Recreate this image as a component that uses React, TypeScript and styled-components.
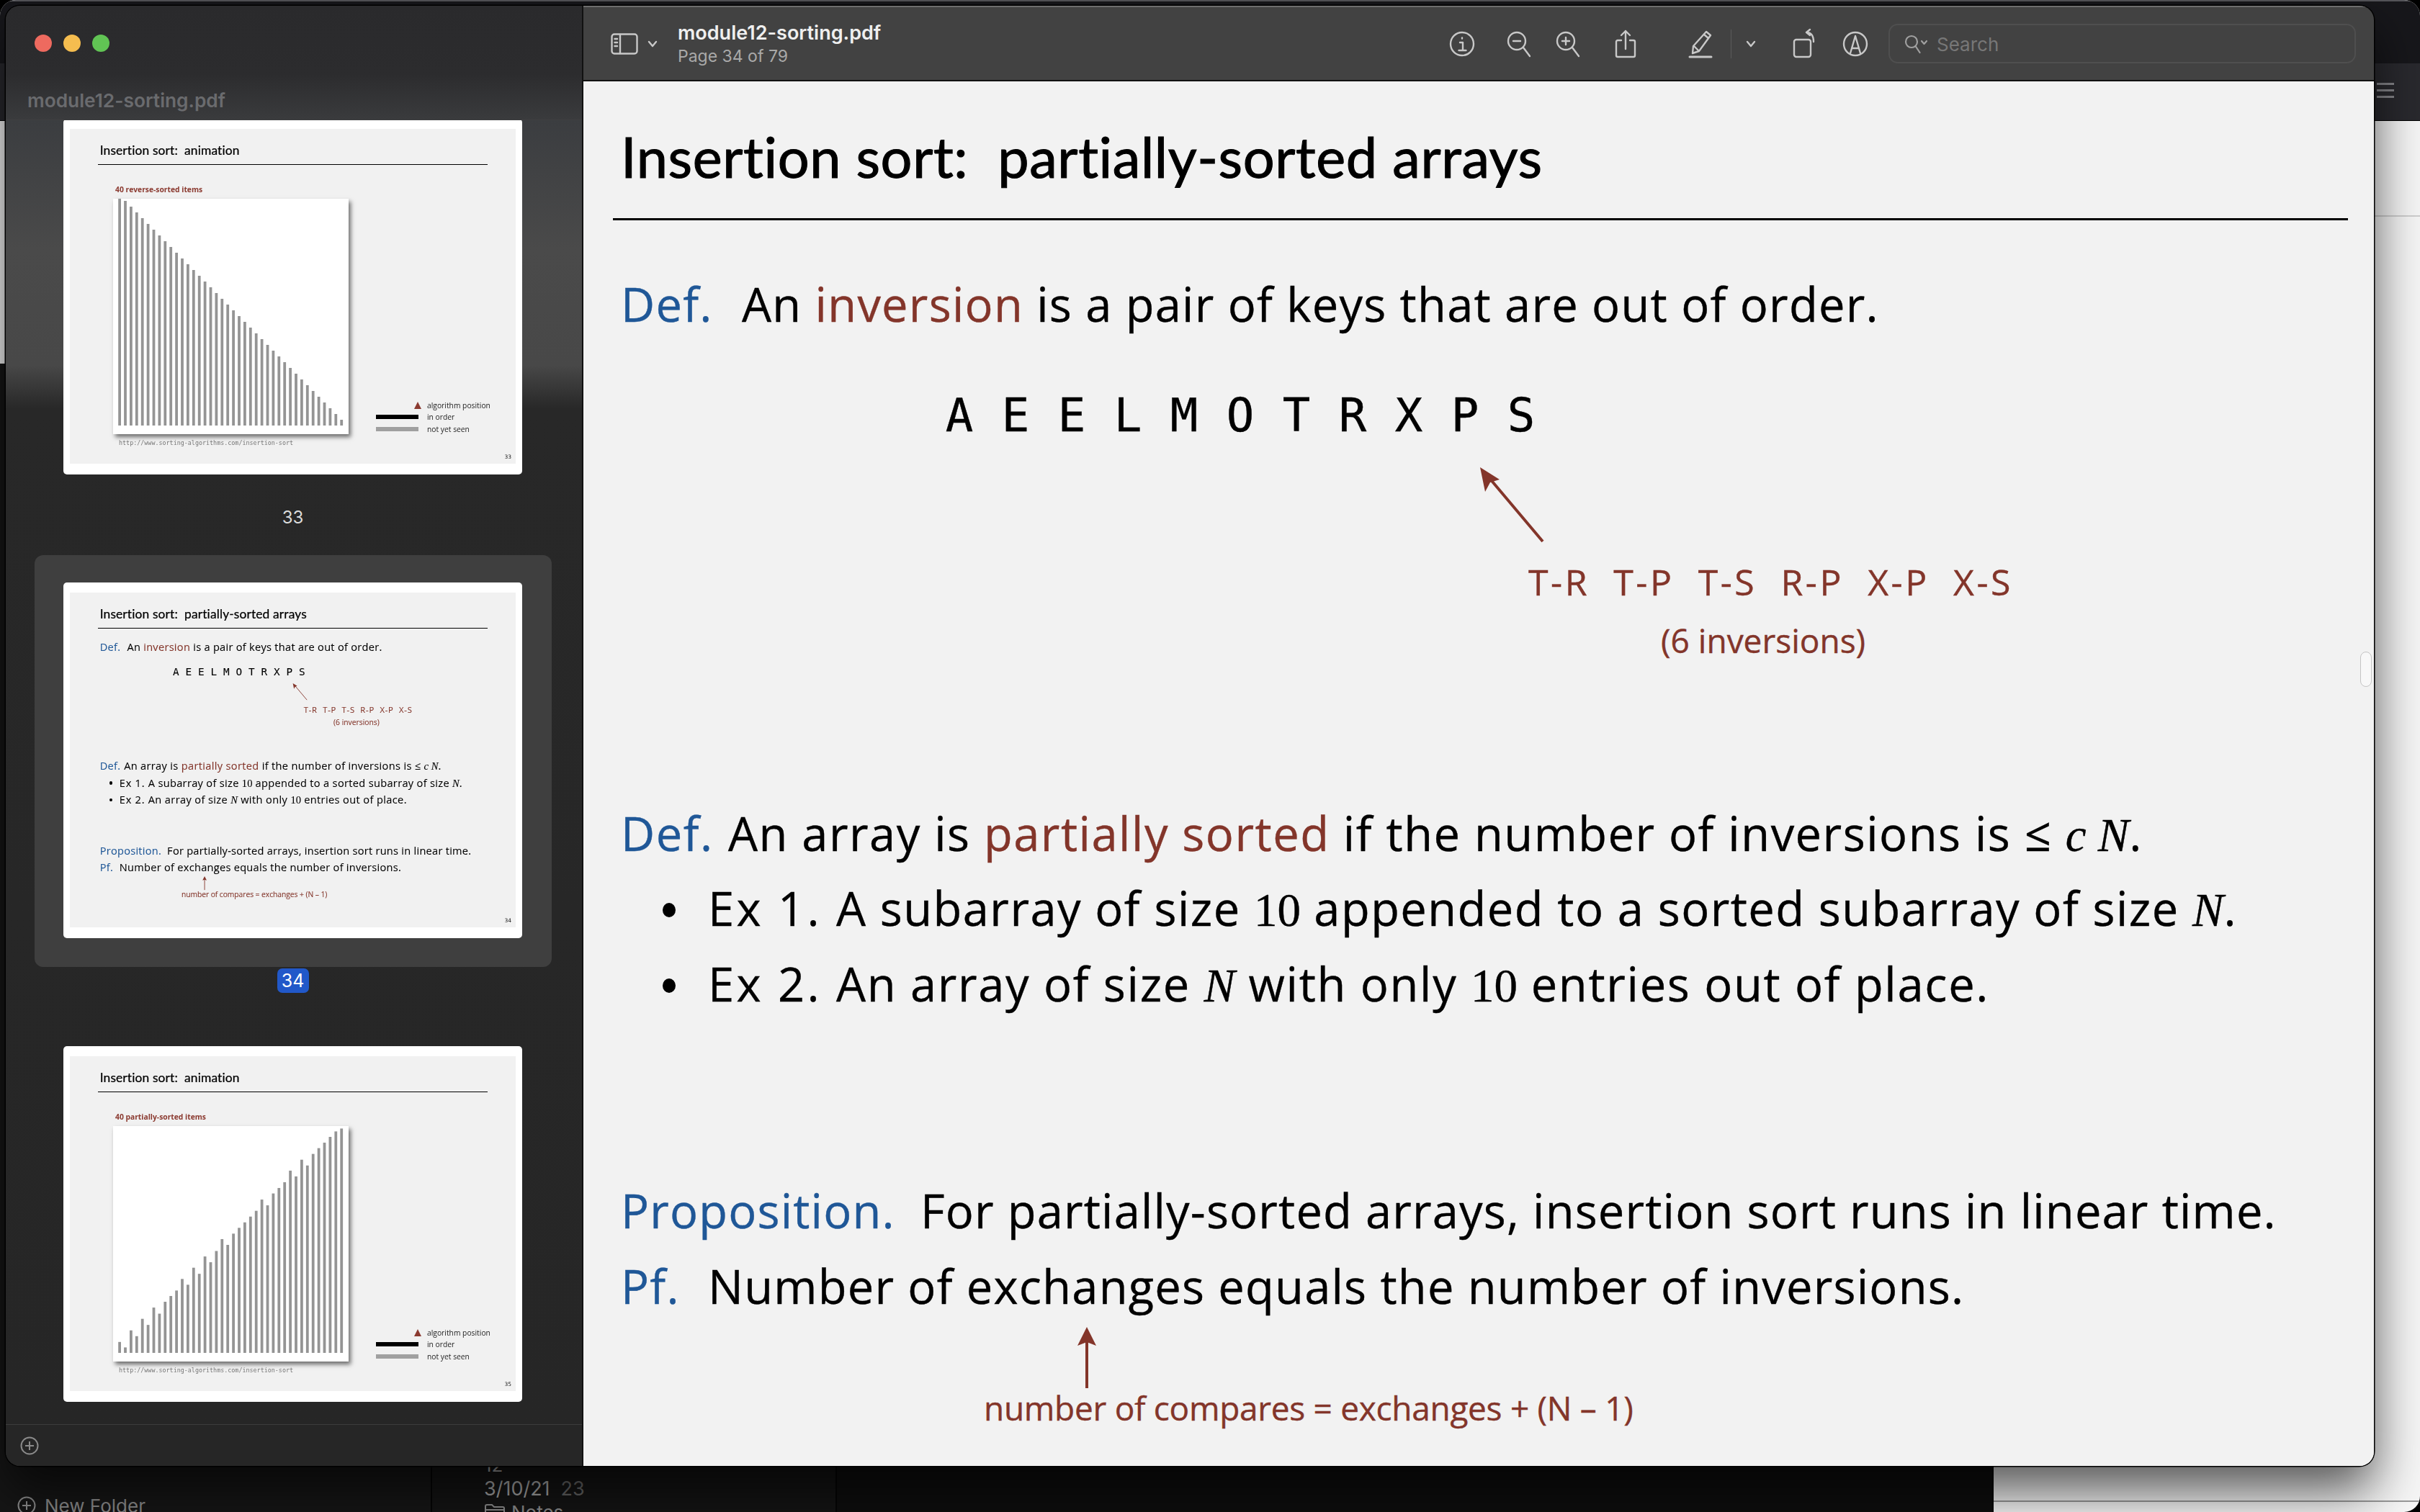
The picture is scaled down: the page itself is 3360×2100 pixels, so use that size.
import React from 'react';
import styled, { createGlobalStyle } from 'styled-components';

const GlobalStyle = createGlobalStyle`
  html, body { margin: 0; padding: 0; background: #000; }
  * { box-sizing: border-box; }
`;

const BLUE = '#1f5797';
const RED = '#83352a';
const THUMB_ZOOM = 0.2246;

/* ---------- the desktop behind the window ---------- */

const Desktop = styled.div`
  position: relative;
  width: 3360px;
  height: 2100px;
  overflow: hidden;
  background: #000;
  font-family: Inter, "Liberation Sans", sans-serif;
`;

const BackWindow = styled.div`
  position: absolute;
  inset: 0;
  border-radius: 22px;
  overflow: hidden;
  background: #f6f6f6;
  display: flex;
  flex-direction: column;
`;

const BackHeader = styled.div`
  height: 168px;
  flex-shrink: 0;
  border-top: 2px solid #55555a;
  background: linear-gradient(#17171b 0, #17171b 86px, #29292e 86px, #29292e 100%);
  border-bottom: 1px solid #000;
  display: flex;
  flex-direction: column;
  justify-content: flex-end;
  align-items: flex-end;
  gap: 6px;
  padding: 0 36px 31px 0;
`;

const BackBar = styled.div`
  width: 24px;
  height: 3px;
  background: #85858a;
`;

const BackLine = styled.div<{ $top: number; $left: number; $color: string }>`
  position: absolute;
  top: ${p => p.$top}px;
  left: ${p => p.$left}px;
  right: 0;
  height: 2px;
  background: ${p => p.$color};
`;

const BackPanels = styled.div`
  position: absolute;
  left: 0;
  top: 505px;
  bottom: 0;
  width: 2768px;
  border-radius: 22px 0 0 0;
  background: #161616;
  display: flex;
  color: #8c8c8c;
  font-size: 26px;
`;

const BackColumn = styled.div<{ $w?: number; $bg: string }>`
  ${p => (p.$w ? `width: ${p.$w}px;` : 'flex: 1;')}
  background: ${p => p.$bg};
  border-right: 2px solid #050505;
  display: flex;
  flex-direction: column;
  justify-content: flex-end;
  overflow: hidden;
`;

const NewFolder = styled.div`
  display: flex;
  align-items: center;
  gap: 12px;
  margin: 0 0 -8px 24px;
  height: 34px;
`;

const DateRow = styled.div`
  margin: 0 0 -6px 72px;
  height: 36px;
  line-height: 36px;
  display: flex;
  gap: 15px;
  color: #a8a8a8;
  font-size: 27px;
`;

const CountText = styled.span`
  color: #666;
`;

const NotesRow = styled.div`
  margin: 0 0 -20px 72px;
  height: 40px;
  display: flex;
  align-items: center;
  gap: 8px;
`;

const CutRow = styled.div`
  margin: 0 0 11px 72px;
  height: 8px;
  line-height: 8px;
  color: #a8a8a8;
`;

/* ---------- PDF window ---------- */

const Window = styled.div`
  position: absolute;
  left: 8px;
  top: 8px;
  width: 3288px;
  height: 2028px;
  border-radius: 20px;
  overflow: hidden;
  display: flex;
  box-shadow: 0 0 0 1.5px #000, 0 35px 70px rgba(0, 0, 0, 0.65);
`;

const Sidebar = styled.aside`
  width: 802px;
  flex-shrink: 0;
  display: flex;
  flex-direction: column;
  background: #262626;
  border-right: 2px solid #111;
`;

const SidebarHeader = styled.div`
  height: 159px;
  flex-shrink: 0;
  padding: 40px 0 0 40px;
  background: linear-gradient(#2a2a2c 0, #2c2c2e 60%, #3a3b3d 100%);
  border-bottom: 1px solid #3f3f41;
`;

const Lights = styled.div`
  display: flex;
  gap: 16px;
`;

const Light = styled.span<{ $color: string }>`
  width: 24px;
  height: 24px;
  border-radius: 50%;
  background: ${p => p.$color};
`;

const SidebarTitle = styled.div`
  margin: 52px 0 0 -10px;
  font-size: 26.3px;
  line-height: 32px;
  font-weight: 600;
  color: #6a6b6e;
`;

const ThumbScroller = styled.div`
  flex: 1;
  overflow: hidden;
  background: linear-gradient(#3b3d40 0, #4a4a4a 180px, #484848 340px, #282828 400px, #262626 100%);
`;

const ThumbList = styled.div`
  display: flex;
  flex-direction: column;
  align-items: center;
  padding-right: 3px;
  margin-top: -2px;
`;

const PageLabel = styled.div`
  margin-top: 43px;
  height: 34px;
  line-height: 34px;
  font-size: 24px;
  color: #dcdcdc;
`;

const Selection = styled.div`
  margin-top: 35px;
  width: 718px;
  padding: 38px 0 40px;
  border-radius: 12px;
  background: #3f3f3f;
  display: flex;
  justify-content: center;
`;

const PageBadge = styled.div`
  margin-top: 2px;
  width: 44px;
  height: 34px;
  line-height: 34px;
  border-radius: 7px;
  background: #2158c9;
  color: #fff;
  font-size: 25px;
  text-align: center;
`;

const ThumbGap = styled.div`
  height: 74px;
`;

const SidebarFooter = styled.div`
  height: 58px;
  flex-shrink: 0;
  border-top: 1px solid #3c3c3c;
  background: #262626;
  padding: 16px 0 0 20px;
`;

/* ---------- thumbnails ---------- */

const Thumb = styled.div`
  width: 637px;
  height: 494px;
  flex-shrink: 0;
  padding: 14px 9px 15px;
  background: #fff;
  border-radius: 5px;
`;

const ThumbSheet = styled.div`
  position: relative;
  height: 100%;
  background: #f1f1f1;
  overflow: hidden;
  filter: blur(0.45px);
`;

const ThumbScale = styled.div`
  zoom: ${THUMB_ZOOM};
  padding: 26.8px 0 0 133.6px;
`;

const PageNumber = styled.span`
  position: absolute;
  right: 6px;
  bottom: 5px;
  font-family: "DejaVu Sans", sans-serif;
  font-size: 7.5px;
  color: #222;
`;

const ChartLabel = styled.div`
  margin: 27.6px 0 0 63px;
  height: 14px;
  line-height: 14px;
  font-family: "Open Sans", sans-serif;
  font-weight: 700;
  font-size: 10.3px;
  color: #8b3a30;
`;

const ChartRow = styled.div`
  margin: 6px 0 0 60px;
  display: flex;
  align-items: flex-end;
  gap: 38px;
`;

const ChartFrame = styled.svg`
  display: block;
  width: 327px;
  height: 327px;
  background: #fff;
  box-shadow: 3px 4px 6px rgba(0, 0, 0, 0.55);
`;

const Legend = styled.div`
  display: grid;
  grid-template-columns: 59px auto;
  column-gap: 12px;
  grid-auto-rows: 16.5px;
  align-items: center;
  margin-bottom: -1px;
  font-family: "Open Sans", sans-serif;
  font-size: 10.3px;
  color: #222;
`;

const LegendMark = styled.div<{ $color: string }>`
  height: 6px;
  background: ${p => p.$color};
`;

const LegendTriangle = styled.div`
  justify-self: end;
  margin-right: -4px;
  width: 0;
  height: 0;
  border-left: 5px solid transparent;
  border-right: 5px solid transparent;
  border-bottom: 10px solid #8b3a30;
`;

const SourceUrl = styled.div`
  margin: 6px 0 0 68px;
  font-family: "DejaVu Sans Mono", monospace;
  font-size: 8.4px;
  line-height: 12px;
  color: #777;
`;

/* ---------- toolbar ---------- */

const Main = styled.main`
  flex: 1;
  min-width: 0;
  display: flex;
  flex-direction: column;
`;

const Toolbar = styled.header`
  height: 105px;
  flex-shrink: 0;
  display: flex;
  align-items: center;
  padding: 0 25px 0 37px;
  background: #424242;
  border-top: 2px solid #6d6d6d;
  border-bottom: 2px solid #111;
  color: #c8c8c8;
`;

const DocInfo = styled.div`
  flex: 1;
  margin-left: 28px;
`;

const DocTitle = styled.div`
  font-size: 27px;
  line-height: 32px;
  font-weight: 600;
  color: #efefef;
`;

const DocPage = styled.div`
  margin-top: 2px;
  font-size: 23px;
  line-height: 28px;
  color: #a9a9a9;
`;

const Tool = styled.div<{ $w?: number; $ml?: number }>`
  width: ${p => p.$w ?? 44}px;
  margin-left: ${p => p.$ml ?? 0}px;
  flex-shrink: 0;
  display: flex;
  justify-content: center;
  svg {
    display: block;
    overflow: visible;
    fill: none;
    stroke: currentColor;
    stroke-width: 2.4;
    stroke-linecap: round;
    stroke-linejoin: round;
  }
`;

const ToolDivider = styled.div`
  width: 1px;
  height: 40px;
  margin-left: 20px;
  background: #5a5a5a;
`;

const SearchField = styled.div`
  width: 649px;
  height: 55px;
  margin-left: 24px;
  flex-shrink: 0;
  display: flex;
  align-items: center;
  gap: 13px;
  padding: 2px 0 0 20px;
  border: 2px solid #4f4f4f;
  border-radius: 13px;
  color: #777;
  font-size: 26px;
  svg {
    fill: none;
    stroke: #a0a0a0;
    stroke-width: 2.2;
    stroke-linecap: round;
    stroke-linejoin: round;
  }
`;

/* ---------- the slide ---------- */

const Page = styled.section`
  position: relative;
  flex: 1;
  min-height: 0;
  background: #f2f2f2;
  overflow: hidden;
`;

const SlideColumn = styled.div`
  width: 2486px;
  white-space: pre;
  color: #000;
  font-family: "Open Sans", sans-serif;
  -webkit-text-stroke: 0.4px currentColor;
`;

const SlideTitle = styled.h1`
  margin: 0;
  height: 190px;
  padding: 20px 0 0 52px;
  line-height: 170px;
  font-family: Lato, sans-serif;
  font-size: 77.5px;
  font-weight: 400;
  letter-spacing: 0.6px;
  -webkit-text-stroke: 1.1px #000;
`;

const SlideRule = styled.div`
  margin-left: 41px;
  width: 2409px;
  height: 3px;
  background: #000;
`;

const TextLine = styled.div<{ $top: number; $spacing?: number }>`
  margin-top: ${p => p.$top}px;
  padding-left: 52px;
  height: 100px;
  line-height: 100px;
  font-size: 65px;
  letter-spacing: ${p => p.$spacing ?? 0}px;
`;

const Lead = styled.span<{ $w: number }>`
  display: inline-block;
  width: ${p => p.$w}px;
  color: ${BLUE};
`;

const Term = styled.span`
  color: ${RED};
`;

const ExLabel = styled.span`
  letter-spacing: 3.3px;
`;

const Bullet = styled.span`
  display: inline-block;
  width: 18px;
  height: 20px;
  margin: 0 45px 0 58px;
  border-radius: 50%;
  background: #000;
  vertical-align: 12px;
`;

const Serif = styled.span`
  font-family: "Liberation Serif", serif;
  letter-spacing: 0;
`;

const SerifItalic = styled(Serif)`
  font-style: italic;
`;

const KeyRow = styled.div`
  margin: 55px 0 0 483px;
  height: 100px;
  display: flex;
`;

const Key = styled.span`
  width: 78px;
  text-align: center;
  line-height: 100px;
  font-family: "DejaVu Sans Mono", monospace;
  font-size: 64px;
`;

const ArrowRow = styled.svg<{ $top: number; $h: number }>`
  display: block;
  margin-top: ${p => p.$top}px;
  width: 2486px;
  height: ${p => p.$h}px;
  overflow: visible;
`;

const RedLine = styled.div<{ $top: number; $left: number; $size: number; $h: number; $spacing?: number }>`
  margin-top: ${p => p.$top}px;
  padding-left: ${p => p.$left}px;
  height: ${p => p.$h}px;
  line-height: ${p => p.$h}px;
  font-size: ${p => p.$size}px;
  letter-spacing: ${p => p.$spacing ?? 0}px;
  color: ${RED};
`;

const PageGrip = styled.div`
  position: absolute;
  right: 3px;
  top: 792px;
  width: 16px;
  height: 49px;
  border-radius: 8px;
  background: #f8f8f8;
  border: 1px solid #c4c4c4;
`;

/* ---------- data ---------- */

const KEYS = ['A', 'E', 'E', 'L', 'M', 'O', 'T', 'R', 'X', 'P', 'S'];

const REVERSED = Array.from({ length: 40 }, (_, i) => 8 * (40 - i));

const PARTIAL_TOPS = [
  1040, 1057, 1004, 1022, 968, 987, 933, 952, 915, 897, 880, 844, 862, 809, 828, 774, 792, 757, 720, 738,
  703, 685, 668, 650, 632, 597, 615, 578, 561, 543, 507, 525, 473, 491, 455, 437, 420, 402, 385, 376,
];
const PARTIAL = PARTIAL_TOPS.map(top => (1074 - top) / 2.24);

/* ---------- pieces ---------- */

const SlideHead: React.FC<{ topic: string }> = ({ topic }) => (
  <>
    <SlideTitle>{`Insertion sort:  ${topic}`}</SlideTitle>
    <SlideRule />
  </>
);

const PartialSlide: React.FC = () => (
  <SlideColumn>
    <SlideHead topic="partially-sorted arrays" />
    <TextLine $top={66} $spacing={1.25}>
      <Lead $w={168}>Def.</Lead>An <Term>inversion</Term> is a pair of keys that are out of order.
    </TextLine>
    <KeyRow>
      {KEYS.map((k, i) => (
        <Key key={i}>{k}</Key>
      ))}
    </KeyRow>
    <ArrowRow $top={22} $h={103} viewBox="0 0 2486 103">
      <line x1="1332" y1="103" x2="1252" y2="8" stroke={RED} strokeWidth="4" />
      <polygon points="1245,0 1272,17 1259,21 1252,34" fill={RED} />
    </ArrowRow>
    <RedLine $top={18} $left={1312} $size={50} $h={76} $spacing={3.55}>T-R  T-P  T-S  R-P  X-P  X-S</RedLine>
    <RedLine $top={5} $left={1496} $size={46} $h={76}>(6 inversions)</RedLine>
    <TextLine $top={180} $spacing={1.5}>
      <Lead $w={149}>Def.</Lead>An array is <Term>partially sorted</Term> if the number of inversions is ≤ <SerifItalic>c N</SerifItalic>.
    </TextLine>
    <TextLine $top={4} $spacing={1.45}>
      <Bullet /><ExLabel>Ex 1. </ExLabel>A subarray of size <Serif>10</Serif> appended to a sorted subarray of size <SerifItalic>N</SerifItalic>.
    </TextLine>
    <TextLine $top={5} $spacing={1.7}>
      <Bullet /><ExLabel>Ex 2. </ExLabel>An array of size <SerifItalic>N</SerifItalic> with only <Serif>10</Serif> entries out of place.
    </TextLine>
    <TextLine $top={215} $spacing={1.17}>
      <Lead $w={416}>Proposition.</Lead>For partially-sorted arrays, insertion sort runs in linear time.
    </TextLine>
    <TextLine $top={5} $spacing={1.23}>
      <Lead $w={121}>Pf.</Lead>Number of exchanges equals the number of inversions.
    </TextLine>
    <ArrowRow $top={7} $h={85} viewBox="0 0 2486 85">
      <line x1="699" y1="85" x2="699" y2="18" stroke={RED} strokeWidth="4" />
      <polygon points="699,0 712,26 699,21 686,26" fill={RED} />
    </ArrowRow>
    <RedLine $top={2} $left={556} $size={46} $h={50} $spacing={-0.3}>number of compares = exchanges + (N – 1)</RedLine>
  </SlideColumn>
);

const AnimationSheet: React.FC<{ label: string; bars: number[]; page: number }> = ({ label, bars, page }) => (
  <ThumbSheet>
    <ThumbScale>
      <SlideColumn>
        <SlideHead topic="animation" />
      </SlideColumn>
    </ThumbScale>
    <ChartLabel>{label}</ChartLabel>
    <ChartRow>
      <ChartFrame viewBox="0 0 327 327">
        {bars.map((h, i) => (
          <rect key={i} x={7.2 + i * 7.9} y={315 - h} width={3.8} height={h} fill="#949494" />
        ))}
      </ChartFrame>
      <Legend>
        <LegendTriangle />
        <span>algorithm position</span>
        <LegendMark $color="#000" />
        <span>in order</span>
        <LegendMark $color="#a0a0a0" />
        <span>not yet seen</span>
      </Legend>
    </ChartRow>
    <SourceUrl>http://www.sorting-algorithms.com/insertion-sort</SourceUrl>
    <PageNumber>{page}</PageNumber>
  </ThumbSheet>
);

const PlusCircle: React.FC<{ color: string }> = ({ color }) => (
  <svg width="26" height="26" viewBox="0 0 26 26" fill="none" stroke={color} strokeWidth="2">
    <circle cx="13" cy="13" r="11.5" />
    <path d="M13 7v12M7 13h12" />
  </svg>
);

const ChevronIcon: React.FC = () => (
  <svg width="14" height="10" viewBox="0 0 14 10">
    <path d="M2 2l5 6 5-6" />
  </svg>
);

export default function App() {
  return (
    <Desktop>
      <GlobalStyle />
      <BackWindow>
        <BackHeader>
          <BackBar />
          <BackBar />
          <BackBar />
        </BackHeader>
        <BackLine $top={299} $left={3296} $color="#cfcfcf" />
        <BackLine $top={2084} $left={2768} $color="#9a9a9a" />
      </BackWindow>
      <BackPanels>
        <BackColumn $w={600} $bg="#161616">
          <NewFolder>
            <PlusCircle color="#8c8c8c" />
            New Folder
          </NewFolder>
        </BackColumn>
        <BackColumn $w={562} $bg="#141414">
          <CutRow>12</CutRow>
          <DateRow>
            3/10/21<CountText>23</CountText>
          </DateRow>
          <NotesRow>
            <svg width="30" height="24" viewBox="0 0 30 24" fill="none" stroke="#8c8c8c" strokeWidth="2">
              <path d="M2 21V4a2 2 0 0 1 2-2h7l3 3h12a2 2 0 0 1 2 2v14M2 9h26" />
            </svg>
            Notes
          </NotesRow>
        </BackColumn>
        <BackColumn $bg="#0e0e0e" />
      </BackPanels>

      <Window>
        <Sidebar>
          <SidebarHeader>
            <Lights>
              <Light $color="#ee6a5f" />
              <Light $color="#f5bd4f" />
              <Light $color="#61c454" />
            </Lights>
            <SidebarTitle>module12-sorting.pdf</SidebarTitle>
          </SidebarHeader>
          <ThumbScroller>
            <ThumbList>
              <Thumb>
                <AnimationSheet label="40 reverse-sorted items" bars={REVERSED} page={33} />
              </Thumb>
              <PageLabel>33</PageLabel>
              <Selection>
                <Thumb>
                  <ThumbSheet>
                    <ThumbScale>
                      <PartialSlide />
                    </ThumbScale>
                    <PageNumber>34</PageNumber>
                  </ThumbSheet>
                </Thumb>
              </Selection>
              <PageBadge>34</PageBadge>
              <ThumbGap />
              <Thumb>
                <AnimationSheet label="40 partially-sorted items" bars={PARTIAL} page={35} />
              </Thumb>
            </ThumbList>
          </ThumbScroller>
          <SidebarFooter>
            <PlusCircle color="#8a8a8a" />
          </SidebarFooter>
        </Sidebar>

        <Main>
          <Toolbar>
            <Tool $w={40}>
              <svg width="38" height="30" viewBox="0 0 38 30" stroke="#a8a8a8">
                <rect x="1.5" y="1.5" width="35" height="27" rx="3.5" />
                <path d="M13 2v26M5.5 8h3.5M5.5 13h3.5M5.5 18h3.5" />
              </svg>
            </Tool>
            <Tool $w={14} $ml={12}>
              <ChevronIcon />
            </Tool>
            <DocInfo>
              <DocTitle>module12-sorting.pdf</DocTitle>
              <DocPage>Page 34 of 79</DocPage>
            </DocInfo>
            <Tool>
              <svg width="36" height="36" viewBox="0 0 36 36">
                <circle cx="18" cy="18" r="16" />
                <path d="M15 16h4v11M13.5 27h10M18 9.5v1" />
              </svg>
            </Tool>
            <Tool $ml={35}>
              <svg width="34" height="36" viewBox="0 0 34 36">
                <circle cx="14" cy="14" r="12" />
                <path d="M23 23l9 12M9 14h10" />
              </svg>
            </Tool>
            <Tool $ml={24}>
              <svg width="34" height="36" viewBox="0 0 34 36">
                <circle cx="14" cy="14" r="12" />
                <path d="M23 23l9 12M9 14h10M14 9v10" />
              </svg>
            </Tool>
            <Tool $ml={36}>
              <svg width="32" height="40" viewBox="0 0 32 40">
                <path d="M10 15H5a2 2 0 0 0-2 2v19a2 2 0 0 0 2 2h22a2 2 0 0 0 2-2V17a2 2 0 0 0-2-2h-5" />
                <path d="M16 27V2M10 8l6-6 6 6" />
              </svg>
            </Tool>
            <Tool $ml={60}>
              <svg width="36" height="38" viewBox="0 0 36 38">
                <path d="M26 2l6 5-16 22-9 3 1-10z" />
                <path d="M9 22l6 6M23 6l6 5" />
                <path d="M3 37h30" strokeWidth="3" />
              </svg>
            </Tool>
            <ToolDivider />
            <Tool $w={20} $ml={17}>
              <ChevronIcon />
            </Tool>
            <Tool $ml={40}>
              <svg width="36" height="40" viewBox="0 0 36 40">
                <rect x="6" y="14" width="23" height="24" rx="3" />
                <path d="M33 17c0-8-3-13-10-13M23 4l5-4M23 4l5 4" />
              </svg>
            </Tool>
            <Tool $ml={29}>
              <svg width="36" height="36" viewBox="0 0 36 36">
                <circle cx="18" cy="18" r="16" />
                <path d="M11 31l7-24 7 24M13.5 24h9" />
              </svg>
            </Tool>
            <SearchField>
              <svg width="32" height="28" viewBox="0 0 32 28">
                <circle cx="10" cy="10" r="8" />
                <path d="M15.5 16l6 9M24 9l3.5 4 3.5-4" />
              </svg>
              Search
            </SearchField>
          </Toolbar>
          <Page>
            <PartialSlide />
            <PageGrip />
          </Page>
        </Main>
      </Window>
    </Desktop>
  );
}
